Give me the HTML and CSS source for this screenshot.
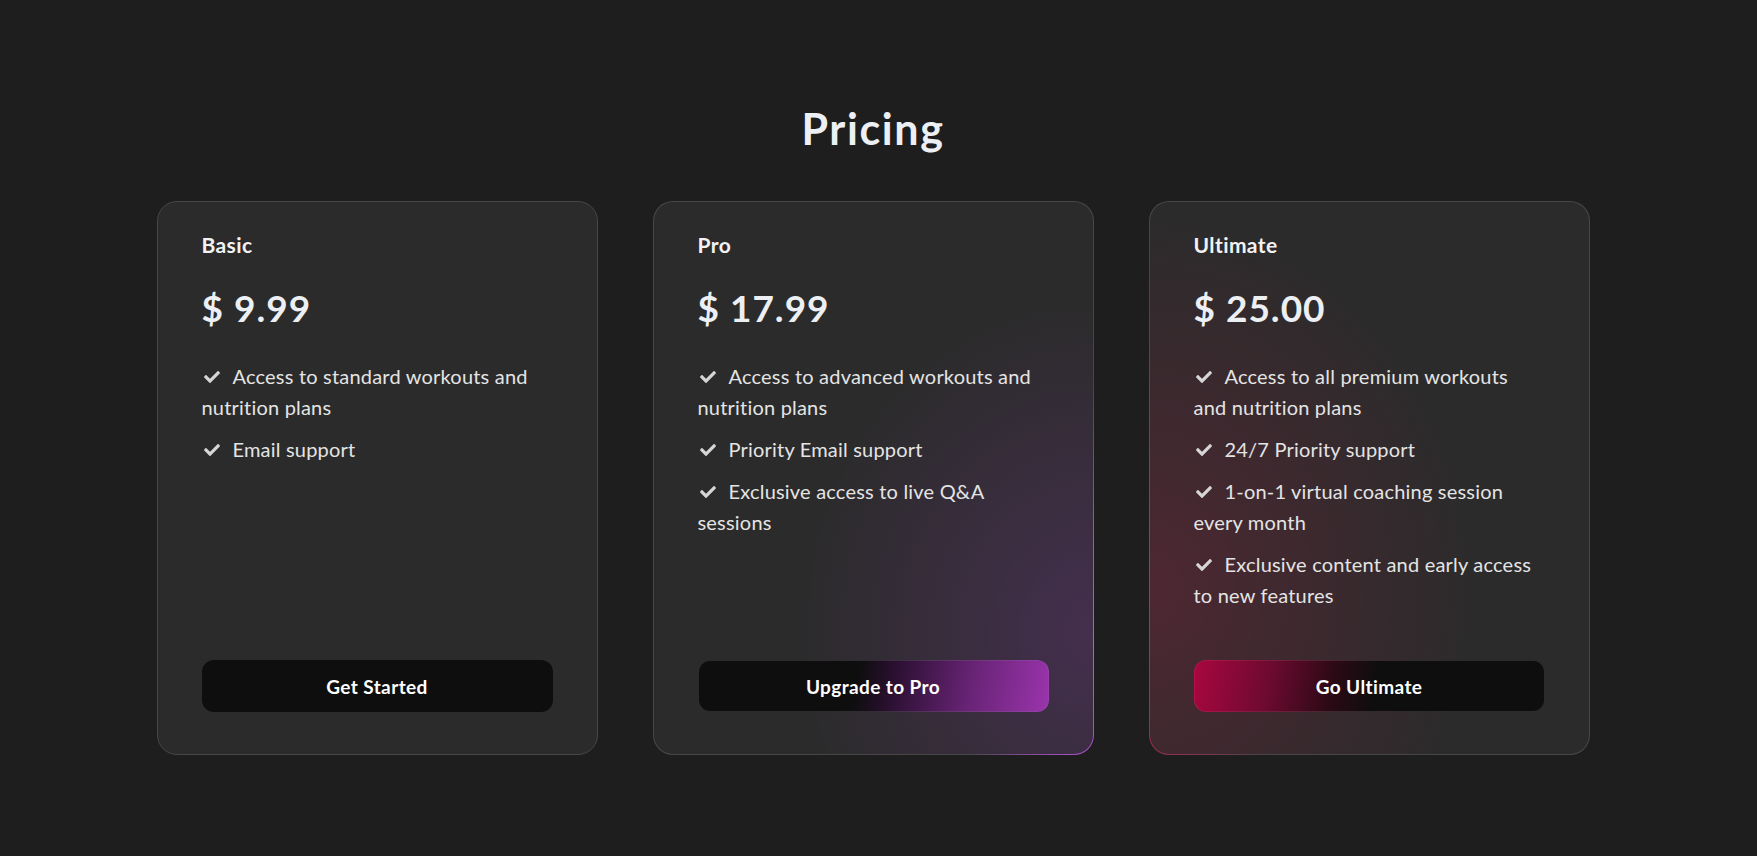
FILE: index.html
```html
<!DOCTYPE html>
<html lang="en">
<head>
<meta charset="utf-8">
<title>Pricing</title>
<link rel="stylesheet" href="styles.css">
</head>
<body>
<main class="page">
  <h1 class="title">Pricing</h1>
  <div class="plans">
    <section class="card">
      <h2 class="plan-name">Basic</h2>
      <div class="price">$ 9.99</div>
      <ul class="features">
        <li><svg class="check" viewBox="0 0 512 512"><path d="M173.9 439.4l-166.4-166.4c-10-10-10-26.2 0-36.2l36.2-36.2c10-10 26.2-10 36.2 0L192 312.7 432.1 72.6c10-10 26.2-10 36.2 0l36.2 36.2c10 10 10 26.2 0 36.2l-294.4 294.4c-10 10-26.2 10-36.2 0z"/></svg>Access to standard workouts and nutrition plans</li>
        <li><svg class="check" viewBox="0 0 512 512"><path d="M173.9 439.4l-166.4-166.4c-10-10-10-26.2 0-36.2l36.2-36.2c10-10 26.2-10 36.2 0L192 312.7 432.1 72.6c10-10 26.2-10 36.2 0l36.2 36.2c10 10 10 26.2 0 36.2l-294.4 294.4c-10 10-26.2 10-36.2 0z"/></svg>Email support</li>
      </ul>
      <button class="btn">Get Started</button>
    </section>
    <section class="card card-pro">
      <h2 class="plan-name">Pro</h2>
      <div class="price">$ 17.99</div>
      <ul class="features">
        <li><svg class="check" viewBox="0 0 512 512"><path d="M173.9 439.4l-166.4-166.4c-10-10-10-26.2 0-36.2l36.2-36.2c10-10 26.2-10 36.2 0L192 312.7 432.1 72.6c10-10 26.2-10 36.2 0l36.2 36.2c10 10 10 26.2 0 36.2l-294.4 294.4c-10 10-26.2 10-36.2 0z"/></svg>Access to advanced workouts and nutrition plans</li>
        <li><svg class="check" viewBox="0 0 512 512"><path d="M173.9 439.4l-166.4-166.4c-10-10-10-26.2 0-36.2l36.2-36.2c10-10 26.2-10 36.2 0L192 312.7 432.1 72.6c10-10 26.2-10 36.2 0l36.2 36.2c10 10 10 26.2 0 36.2l-294.4 294.4c-10 10-26.2 10-36.2 0z"/></svg>Priority Email support</li>
        <li><svg class="check" viewBox="0 0 512 512"><path d="M173.9 439.4l-166.4-166.4c-10-10-10-26.2 0-36.2l36.2-36.2c10-10 26.2-10 36.2 0L192 312.7 432.1 72.6c10-10 26.2-10 36.2 0l36.2 36.2c10 10 10 26.2 0 36.2l-294.4 294.4c-10 10-26.2 10-36.2 0z"/></svg>Exclusive access to live Q&amp;A sessions</li>
      </ul>
      <button class="btn btn-pro">Upgrade to Pro</button>
    </section>
    <section class="card card-ultimate">
      <h2 class="plan-name">Ultimate</h2>
      <div class="price">$ 25.00</div>
      <ul class="features">
        <li><svg class="check" viewBox="0 0 512 512"><path d="M173.9 439.4l-166.4-166.4c-10-10-10-26.2 0-36.2l36.2-36.2c10-10 26.2-10 36.2 0L192 312.7 432.1 72.6c10-10 26.2-10 36.2 0l36.2 36.2c10 10 10 26.2 0 36.2l-294.4 294.4c-10 10-26.2 10-36.2 0z"/></svg>Access to all premium workouts and nutrition plans</li>
        <li><svg class="check" viewBox="0 0 512 512"><path d="M173.9 439.4l-166.4-166.4c-10-10-10-26.2 0-36.2l36.2-36.2c10-10 26.2-10 36.2 0L192 312.7 432.1 72.6c10-10 26.2-10 36.2 0l36.2 36.2c10 10 10 26.2 0 36.2l-294.4 294.4c-10 10-26.2 10-36.2 0z"/></svg>24/7 Priority support</li>
        <li><svg class="check" viewBox="0 0 512 512"><path d="M173.9 439.4l-166.4-166.4c-10-10-10-26.2 0-36.2l36.2-36.2c10-10 26.2-10 36.2 0L192 312.7 432.1 72.6c10-10 26.2-10 36.2 0l36.2 36.2c10 10 10 26.2 0 36.2l-294.4 294.4c-10 10-26.2 10-36.2 0z"/></svg>1-on-1 virtual coaching session every month</li>
        <li><svg class="check" viewBox="0 0 512 512"><path d="M173.9 439.4l-166.4-166.4c-10-10-10-26.2 0-36.2l36.2-36.2c10-10 26.2-10 36.2 0L192 312.7 432.1 72.6c10-10 26.2-10 36.2 0l36.2 36.2c10 10 10 26.2 0 36.2l-294.4 294.4c-10 10-26.2 10-36.2 0z"/></svg>Exclusive content and early access to new features</li>
      </ul>
      <button class="btn btn-ultimate">Go Ultimate</button>
    </section>
  </div>
</main>
</body>
</html>
```

FILE: styles.css
```css
* { box-sizing: border-box; }

html, body {
  margin: 0;
  padding: 0;
  background: #1e1e1e;
}

body {
  font-family: "Lato", "Noto Sans", sans-serif;
  color: #e6e6e6;
  min-height: 856px;
}

.page {
  width: 1746px;
  display: flex;
  flex-direction: column;
  align-items: center;
  padding-top: 104px;
}

.title {
  margin: 0;
  font-size: 43px;
  line-height: 50px;
  font-weight: 700;
  letter-spacing: 1.6px;
  color: #eceff3;
}

.plans {
  margin-top: 47px;
  display: flex;
  gap: 55px;
}

.card {
  position: relative;
  width: 441px;
  height: 554px;
  display: flex;
  flex-direction: column;
  padding: 28px 44px 42px;
  border-radius: 20px;
  border: 1px solid #474747;
  background: #2b2b2b;
  overflow: hidden;
}

.card-pro {
  border: 1px solid transparent;
  background:
    radial-gradient(ellipse 300px 340px at 100% 78%, rgba(150, 60, 190, 0.24), rgba(150, 60, 190, 0) 100%) padding-box,
    linear-gradient(#2b2b2b, #2b2b2b) padding-box,
    radial-gradient(ellipse 140px 260px at 100% 80%, #de42ee 0%, #a24fc0 45%, #474747 100%) border-box;
}

.card-ultimate {
  border: 1px solid transparent;
  background:
    radial-gradient(ellipse 330px 380px at 0% 70%, rgba(200, 25, 75, 0.22), rgba(200, 25, 75, 0) 100%) padding-box,
    linear-gradient(#2b2b2b, #2b2b2b) padding-box,
    radial-gradient(ellipse 150px 280px at 0% 68%, #ff0a5c 0%, #b52452 45%, #474747 100%) border-box;
}

.plan-name {
  margin: 0;
  font-size: 21px;
  line-height: 30px;
  font-weight: 700;
  letter-spacing: 0.4px;
  color: #f2f2f2;
}

.price {
  margin-top: 26px;
  font-size: 37px;
  line-height: 44px;
  font-weight: 700;
  letter-spacing: 1px;
  color: #eceff3;
}

.features {
  list-style: none;
  margin: 31px 0 0;
  padding: 0;
}

.features li {
  font-size: 20px;
  line-height: 31px;
  letter-spacing: 0.2px;
  color: #e4e4e4;
  margin-bottom: 11px;
}

.check {
  width: 20px;
  height: 16px;
  fill: #d6d6d6;
  margin-right: 11px;
  vertical-align: -1px;
}

.btn {
  margin-top: auto;
  height: 52px;
  width: 100%;
  border: 1px solid transparent;
  border-radius: 12px;
  background: #0e0e0e;
  color: #ffffff;
  font-family: inherit;
  font-size: 19px;
  letter-spacing: 0.4px;
  font-weight: 700;
  cursor: pointer;
}

.btn-pro {
  background:
    linear-gradient(100deg, #0e0e0e 45%, #2a1030 55%, #6a2478 78%, #9a34ac 100%) padding-box,
    linear-gradient(100deg, transparent 50%, #9c40b0 100%) border-box;
}

.btn-ultimate {
  background:
    linear-gradient(100deg, #a8073f 0%, #6c0a30 22%, #2a0a14 40%, #0e0e0e 52%) padding-box,
    linear-gradient(100deg, #b3124a 0%, transparent 45%) border-box;
}
```
